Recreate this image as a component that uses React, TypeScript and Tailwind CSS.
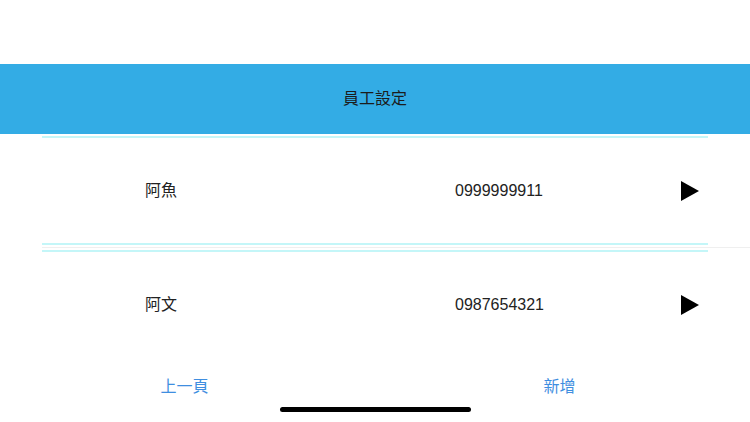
import React from "react";

const font = { fontFamily: '"Liberation Sans", "Noto Sans CJK TC", sans-serif' };

function Row({ name, phone }: { name: string; phone: string }) {
  return (
    <div className="flex h-[105px] items-center">
      <div className="w-[236px] pl-[103px] text-[16px] text-[#222]">{name}</div>
      <div className="w-[404px] pl-[177px] text-[16px] text-[#222]">{phone}</div>
      <svg width="18" height="20" viewBox="0 0 18 20" className="ml-[-1px]">
        <polygon points="0,0 18,10 0,20" fill="#000" />
      </svg>
    </div>
  );
}

export default function App() {
  return (
    <div className="relative h-[422px] w-[750px] overflow-hidden bg-white" style={font}>
      <div className="h-[64px]" />
      <div className="flex h-[70px] items-center justify-center bg-[#33ace5] text-[16px] text-[#1c1c1c]">
        員工設定
      </div>
      <div className="mx-[42px] mt-[2px] h-[2px] bg-[#c4f6f8]" />
      <div className="ml-[42px] w-[666px]">
        <Row name="阿魚" phone="0999999911" />
      </div>
      <div className="mx-[42px] h-[2px] bg-[#c4f6f8]" />
      <div className="ml-[42px] mt-[2px] h-px bg-[#efefef]" />
      <div className="mx-[42px] mt-[2px] h-[2px] bg-[#c4f6f8]" />
      <div className="ml-[42px] w-[666px]">
        <Row name="阿文" phone="0987654321" />
      </div>
      <div className="flex h-[60px] text-[16px] text-[#3f8ee0]">
        <div className="flex flex-1 items-center justify-center pr-[6px]">上一頁</div>
        <div className="flex flex-1 items-center justify-center pr-[6px]">新增</div>
      </div>
      <div className="absolute left-[280px] top-[407px] h-[5px] w-[191px] rounded-full bg-black" />
    </div>
  );
}
